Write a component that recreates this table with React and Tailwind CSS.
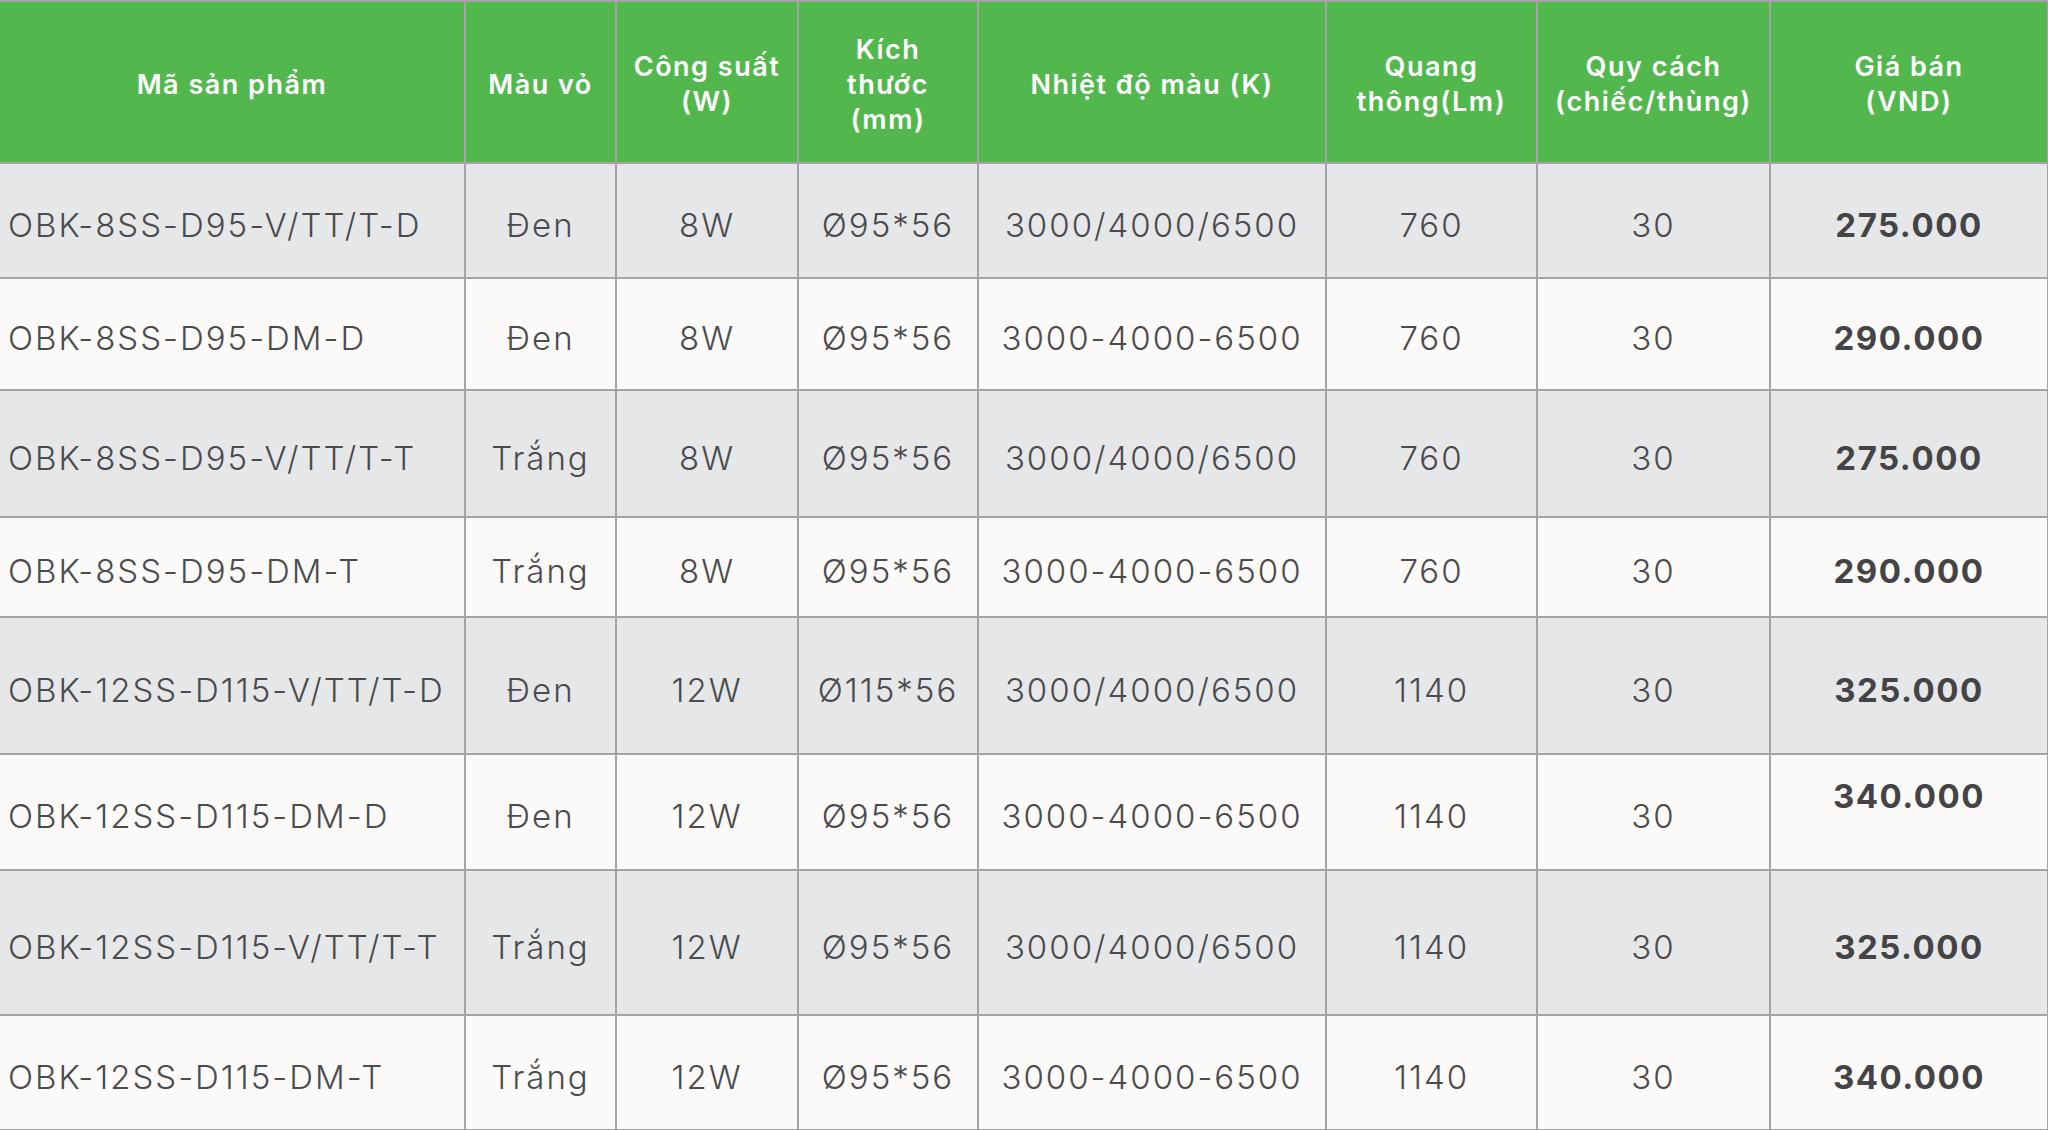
import React from 'react';

const headerLines = [
    ['Mã sản phẩm'],
    ['Màu vỏ'],
    ['Công suất', '(W)'],
    ['Kích', 'thước', '(mm)'],
    ['Nhiệt độ màu (K)'],
    ['Quang', 'thông(Lm)'],
    ['Quy cách', '(chiếc/thùng)'],
    ['Giá bán', '(VND)'],
];

const colWidths = ['w-[465px]', 'w-[151px]', 'w-[182px]', 'w-[180px]', 'w-[348px]', 'w-[211px]', 'w-[233px]', 'w-[278px]'];

const rows = [
    { code: 'OBK-8SS-D95-V/TT/T-D', color: 'Đen', power: '8W', size: 'Ø95*56', temp: '3000/4000/6500', lm: '760', pack: '30', price: '275.000', h: 'h-[115px]' },
    { code: 'OBK-8SS-D95-DM-D', color: 'Đen', power: '8W', size: 'Ø95*56', temp: '3000-4000-6500', lm: '760', pack: '30', price: '290.000', h: 'h-[112px]' },
    { code: 'OBK-8SS-D95-V/TT/T-T', color: 'Trắng', power: '8W', size: 'Ø95*56', temp: '3000/4000/6500', lm: '760', pack: '30', price: '275.000', h: 'h-[127px]' },
    { code: 'OBK-8SS-D95-DM-T', color: 'Trắng', power: '8W', size: 'Ø95*56', temp: '3000-4000-6500', lm: '760', pack: '30', price: '290.000', h: 'h-[100px]' },
    { code: 'OBK-12SS-D115-V/TT/T-D', color: 'Đen', power: '12W', size: 'Ø115*56', temp: '3000/4000/6500', lm: '1140', pack: '30', price: '325.000', h: 'h-[137px]' },
    { code: 'OBK-12SS-D115-DM-D', color: 'Đen', power: '12W', size: 'Ø95*56', temp: '3000-4000-6500', lm: '1140', pack: '30', price: '340.000', h: 'h-[116px]', raised: true },
    { code: 'OBK-12SS-D115-V/TT/T-T', color: 'Trắng', power: '12W', size: 'Ø95*56', temp: '3000/4000/6500', lm: '1140', pack: '30', price: '325.000', h: 'h-[145px]' },
    { code: 'OBK-12SS-D115-DM-T', color: 'Trắng', power: '12W', size: 'Ø95*56', temp: '3000-4000-6500', lm: '1140', pack: '30', price: '340.000', h: 'h-[115px]' },
];

const cell = 'border-2 border-[#a4a4a6] align-middle';
const body = `${cell} text-center pt-[10px] pb-0`;

export default function App() {
    return (
        <div className="w-[2048px] h-[1130px] bg-white overflow-hidden font-['Inter',sans-serif]">
            <table className="w-[2048px] table-fixed border-collapse">
                <colgroup>
                    {colWidths.map((w, i) => <col key={i} className={w} />)}
                </colgroup>
                <thead>
                    <tr className="h-[162px] bg-[#52b84e]">
                        {headerLines.map((lines, i) => (
                            <th
                                key={i}
                                className={`${cell} ${i === 0 ? 'border-l-0' : ''} text-white font-semibold text-[27px] tracking-[1.5px] leading-[35px] text-center px-0 pt-[4px]`}
                            >
                                {lines.map((l, j) => <div key={j} className="whitespace-nowrap">{l}</div>)}
                            </th>
                        ))}
                    </tr>
                </thead>
                <tbody>
                    {rows.map((r, i) => (
                        <tr key={i} className={`${r.h} ${i % 2 === 0 ? 'bg-[#e6e7e9]' : 'bg-[#fbfaf8]'} text-[#4b4b4d] text-[33px] font-light tracking-[2px]`}>
                            <td className={`${cell} border-l-0 text-left pl-[8px] pt-[10px] pb-0 whitespace-nowrap`}>{r.code}</td>
                            <td className={body}>{r.color}</td>
                            <td className={body}>{r.power}</td>
                            <td className={body}>{r.size}</td>
                            <td className={`${body} whitespace-nowrap`}>{r.temp}</td>
                            <td className={body}>{r.lm}</td>
                            <td className={body}>{r.pack}</td>
                            <td className={`${cell} text-center font-bold text-[#444446] tracking-[1.5px] ${r.raised ? 'pt-0 pb-[30px]' : 'pt-[10px] pb-0'}`}>{r.price}</td>
                        </tr>
                    ))}
                </tbody>
            </table>
        </div>
    );
}
